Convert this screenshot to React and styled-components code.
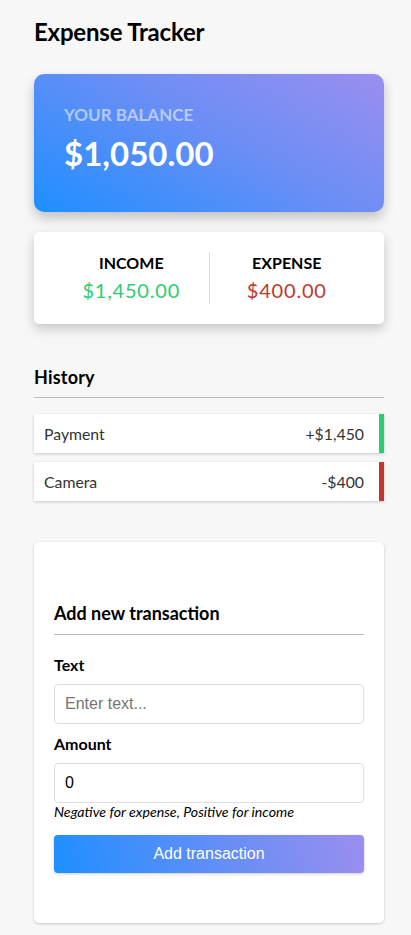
import React from 'react';
import styled, { createGlobalStyle } from 'styled-components';

const transactions = [
  { id: 1, text: 'Payment', amount: 1450 },
  { id: 2, text: 'Camera', amount: -400 },
];

export default function App() {
  return (
    <>
      <GlobalStyle />
      <Page>
        <Title>Expense Tracker</Title>

        <BalanceCard>
          <BalanceLabel>Your Balance</BalanceLabel>
          <BalanceValue>$1,050.00</BalanceValue>
        </BalanceCard>

        <IncExpCard>
          <IncExpCol>
            <IncExpLabel>Income</IncExpLabel>
            <IncExpValue $positive>$1,450.00</IncExpValue>
          </IncExpCol>
          <IncExpCol $divider>
            <IncExpLabel>Expense</IncExpLabel>
            <IncExpValue>$400.00</IncExpValue>
          </IncExpCol>
        </IncExpCard>

        <SectionTitle>History</SectionTitle>
        <List>
          {transactions.map((t) => (
            <ListItem key={t.id} $positive={t.amount > 0}>
              <span>{t.text}</span>
              <span>{t.amount > 0 ? '+' : '-'}${Math.abs(t.amount).toLocaleString('en-US')}</span>
            </ListItem>
          ))}
        </List>

        <FormCard>
          <FormTitle>Add new transaction</FormTitle>
          <form onSubmit={(e) => e.preventDefault()}>
            <Label htmlFor="text">Text</Label>
            <Input id="text" type="text" placeholder="Enter text..." />
            <Label htmlFor="amount">Amount</Label>
            <Input id="amount" type="number" defaultValue="0" />
            <Hint>Negative for expense, Positive for income</Hint>
            <Button>Add transaction</Button>
          </form>
        </FormCard>
      </Page>
    </>
  );
}

// Styles
const GlobalStyle = createGlobalStyle`
  * { box-sizing: border-box; }
  body {
    margin: 0;
    background: #f7f7f7;
    font-family: Lato, "Noto Sans", sans-serif;
    color: #000;
  }
`;

const Page = styled.div`
  width: 350px;
  margin-left: 34px;
  padding: 17px 0 13px;
`;

const Title = styled.h2`
  margin: 0 0 28px;
  font-size: 24px;
  line-height: 29px;
  font-weight: 700;
  letter-spacing: -0.2px;
`;

const BalanceCard = styled.div`
  height: 138px;
  padding: 30px 30px;
  border-radius: 10px;
  background: linear-gradient(30deg, #1e8fff 0%, #6c8ef5 55%, #9b8eef 100%);
  box-shadow: 0 6px 12px rgba(0, 0, 0, 0.22);
`;

const BalanceLabel = styled.h4`
  margin: 0;
  font-size: 17px;
  font-weight: 700;
  text-transform: uppercase;
  color: rgba(255, 255, 255, 0.55);
  line-height: 22px;
`;

const BalanceValue = styled.h1`
  margin: 7px 0 0;
  font-size: 33px;
  font-weight: 700;
  color: #fff;
  line-height: 40px;
`;

const IncExpCard = styled.div`
  margin-top: 20px;
  height: 92px;
  background: #fff;
  border-radius: 5px;
  box-shadow: 0 5px 12px rgba(0, 0, 0, 0.2);
  display: flex;
  align-items: center;
  padding: 20px;
`;

const IncExpCol = styled.div`
  flex: 1;
  text-align: center;
  height: 52px;
  margin-top: -1px;
  border-left: ${(p) => (p.$divider ? '1px solid #dedede' : 'none')};
`;

const IncExpLabel = styled.h4`
  margin: 0;
  font-size: 16px;
  font-weight: 700;
  text-transform: uppercase;
  line-height: 22px;
`;

const IncExpValue = styled.p`
  margin: 3px 0 0;
  font-size: 20px;
  letter-spacing: 0.8px;
  line-height: 26px;
  color: ${(p) => (p.$positive ? '#2ecc71' : '#c0392b')};
`;

const SectionTitle = styled.h3`
  margin: 42px 0 16px;
  padding-bottom: 9px;
  border-bottom: 1px solid #bbb;
  font-size: 18px;
  letter-spacing: 0.2px;
  font-weight: 700;
`;

const List = styled.ul`
  list-style: none;
  margin: 0 0 41px;
  padding: 0;
`;

const ListItem = styled.li`
  background: #fff;
  height: 39px;
  margin-bottom: 9px;
  padding: 0 15px 0 10px;
  display: flex;
  justify-content: space-between;
  align-items: center;
  font-size: 15.8px;
  color: #333;
  box-shadow: 0 1px 3px rgba(0, 0, 0, 0.2);
  border-right: 5px solid ${(p) => (p.$positive ? '#2ecc71' : '#c0392b')};
`;

const FormCard = styled.div`
  background: #fff;
  border-radius: 5px;
  box-shadow: 0 1px 3px rgba(0, 0, 0, 0.2);
  padding: 60px 20px 50px;
`;

const FormTitle = styled.h3`
  margin: 0 0 20px;
  padding-bottom: 10px;
  border-bottom: 1px solid #bbb;
  font-size: 18px;
  font-weight: 700;
`;

const Label = styled.label`
  display: block;
  margin-bottom: 9px;
  font-size: 16px;
  font-weight: 700;
  line-height: 20px;
`;

const Input = styled.input`
  display: block;
  width: 100%;
  height: 40px;
  margin-bottom: 10px;
  padding: 10px;
  border: 1px solid #dedede;
  border-radius: 4px;
  font-family: "Liberation Sans", Arial, sans-serif;
  font-size: 16px;
  color: #000;

  &::placeholder {
    color: #757575;
  }
`;

const Hint = styled.small`
  display: block;
  margin-top: -10px;
  margin-bottom: 14px;
  font-size: 14.2px;
  font-style: italic;
  line-height: 18px;
`;

const Button = styled.button`
  display: block;
  width: 100%;
  height: 38px;
  border: 0;
  border-radius: 4px;
  background: linear-gradient(75deg, #1e8fff 0%, #6c8ef5 60%, #9b8eef 100%);
  box-shadow: 0 1px 3px rgba(0, 0, 0, 0.2);
  color: #fff;
  font-family: "Liberation Sans", Arial, sans-serif;
  font-size: 16px;
  cursor: pointer;
`;
